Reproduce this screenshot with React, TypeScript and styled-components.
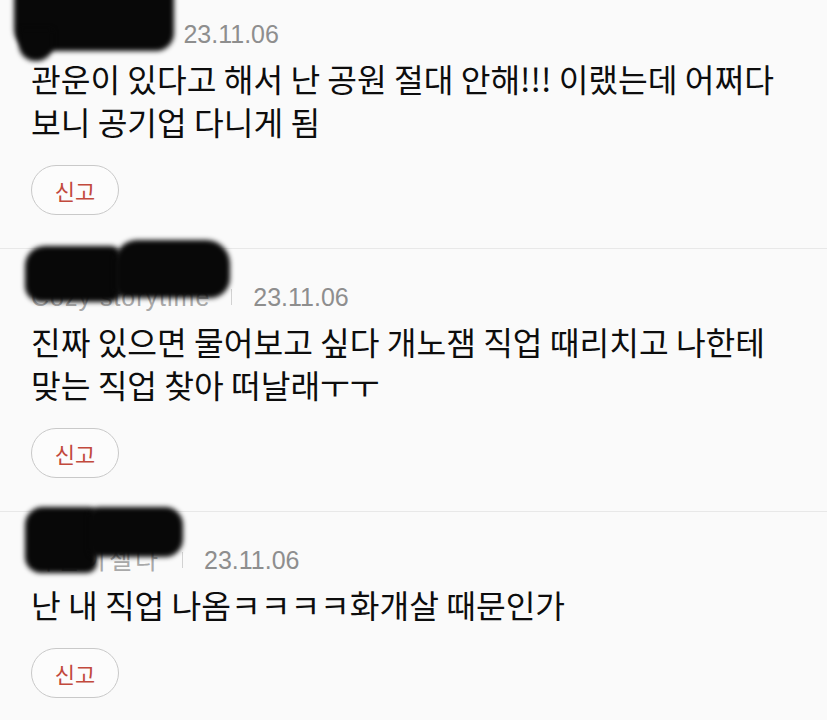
import React from 'react';
import styled, {createGlobalStyle} from 'styled-components';

const GlobalStyle = createGlobalStyle`
  html, body {
    margin: 0;
    padding: 0;
    background: #fafafa;
  }
  body {
    font-family: "Noto Sans CJK KR", "Noto Sans", sans-serif;
    -webkit-font-smoothing: antialiased;
  }
`;

const Page = styled.div`
  width: 827px;
  height: 720px;
  overflow: hidden;
  background: #fafafa;
`;

const Comment = styled.section<{$first?: boolean}>`
  padding: ${p => (p.$first ? '19px' : '33px')} 30px 33px 31px;
  border-bottom: 1px solid #e8e8e8;
`;

const Meta = styled.div`
  position: relative;
  display: flex;
  align-items: center;
  gap: 21px;
  height: 30px;
  line-height: 30px;
  font-family: "Liberation Sans", "Noto Sans CJK KR", sans-serif;
  font-size: 25px;
`;

const Name = styled.span<{$ls: number}>`
  color: #a9a9a9;
  letter-spacing: ${p => p.$ls}px;
  white-space: nowrap;
`;

const Bar = styled.span`
  width: 1px;
  height: 16px;
  background: #d2d2d2;
`;

const DateText = styled.span`
  color: #8e8e8e;
`;

// marker scribble hiding the user name
const Blot = styled.div<{$x: number; $y: number; $w: number; $h: number; $r?: string}>`
  position: absolute;
  left: ${p => p.$x}px;
  top: ${p => p.$y}px;
  width: ${p => p.$w}px;
  height: ${p => p.$h}px;
  border-radius: ${p => p.$r ?? '14px'};
  background: #080808;
  filter: blur(2.5px);
`;

const Body = styled.p`
  margin: 8px 0 0;
  font-size: 32.3px;
  line-height: 43px;
  color: #0d0d0d;
  word-break: keep-all;
`;

const ReportButton = styled.button`
  display: flex;
  align-items: center;
  justify-content: center;
  margin-top: 22px;
  width: 88px;
  height: 50px;
  padding: 0;
  border: 1.5px solid #c9c9c9;
  border-radius: 25px;
  background: #fcfcfc;
  color: #c24a3d;
  font-family: "Noto Sans CJK KR", sans-serif;
  font-size: 22px;
  cursor: pointer;
`;

type Blob = {x: number; y: number; w: number; h: number; r?: string};

type Item = {
  name: string;
  spacing: number;
  date: string;
  text: string;
  blots: Blob[];
};

const items: Item[] = [
  {
    name: 'Loveshot',
    spacing: 1,
    date: '23.11.06',
    text: '관운이 있다고 해서 난 공원 절대 안해!!! 이랬는데 어쩌다 보니 공기업 다니게 됨',
    blots: [
      {x: -17, y: -28, w: 160, h: 60, r: '6px 4px 18px 22px'},
      {x: -12, y: 10, w: 34, h: 32, r: '4px 4px 16px 16px'},
    ],
  },
  {
    name: 'Cozy storytime',
    spacing: 1,
    date: '23.11.06',
    text: '진짜 있으면 물어보고 싶다 개노잼 직업 때리치고 나한테 맞는 직업 찾아 떠날래ㅜㅜ',
    blots: [
      {x: -6, y: -36, w: 96, h: 56, r: '20px 10px 10px 16px'},
      {x: 84, y: -42, w: 115, h: 58, r: '22px 24px 20px 10px'},
    ],
  },
  {
    name: '파란이젤다',
    spacing: 3,
    date: '23.11.06',
    text: '난 내 직업 나옴ㅋㅋㅋㅋ화개살 때문인가',
    blots: [
      {x: -6, y: -38, w: 72, h: 66, r: '18px 8px 10px 16px'},
      {x: 58, y: -38, w: 94, h: 50, r: '10px 18px 18px 8px'},
    ],
  },
];

const App: React.FC = () => {
  return (
    <Page>
      <GlobalStyle />
      {items.map((item, i) => (
        <Comment key={i} $first={i === 0}>
          <Meta>
            <Name $ls={item.spacing}>{item.name}</Name>
            <Bar />
            <DateText>{item.date}</DateText>
            {item.blots.map((b, j) => (
              <Blot key={j} $x={b.x} $y={b.y} $w={b.w} $h={b.h} $r={b.r} />
            ))}
          </Meta>
          <Body>{item.text}</Body>
          <ReportButton>신고</ReportButton>
        </Comment>
      ))}
    </Page>
  );
};

export default App;
